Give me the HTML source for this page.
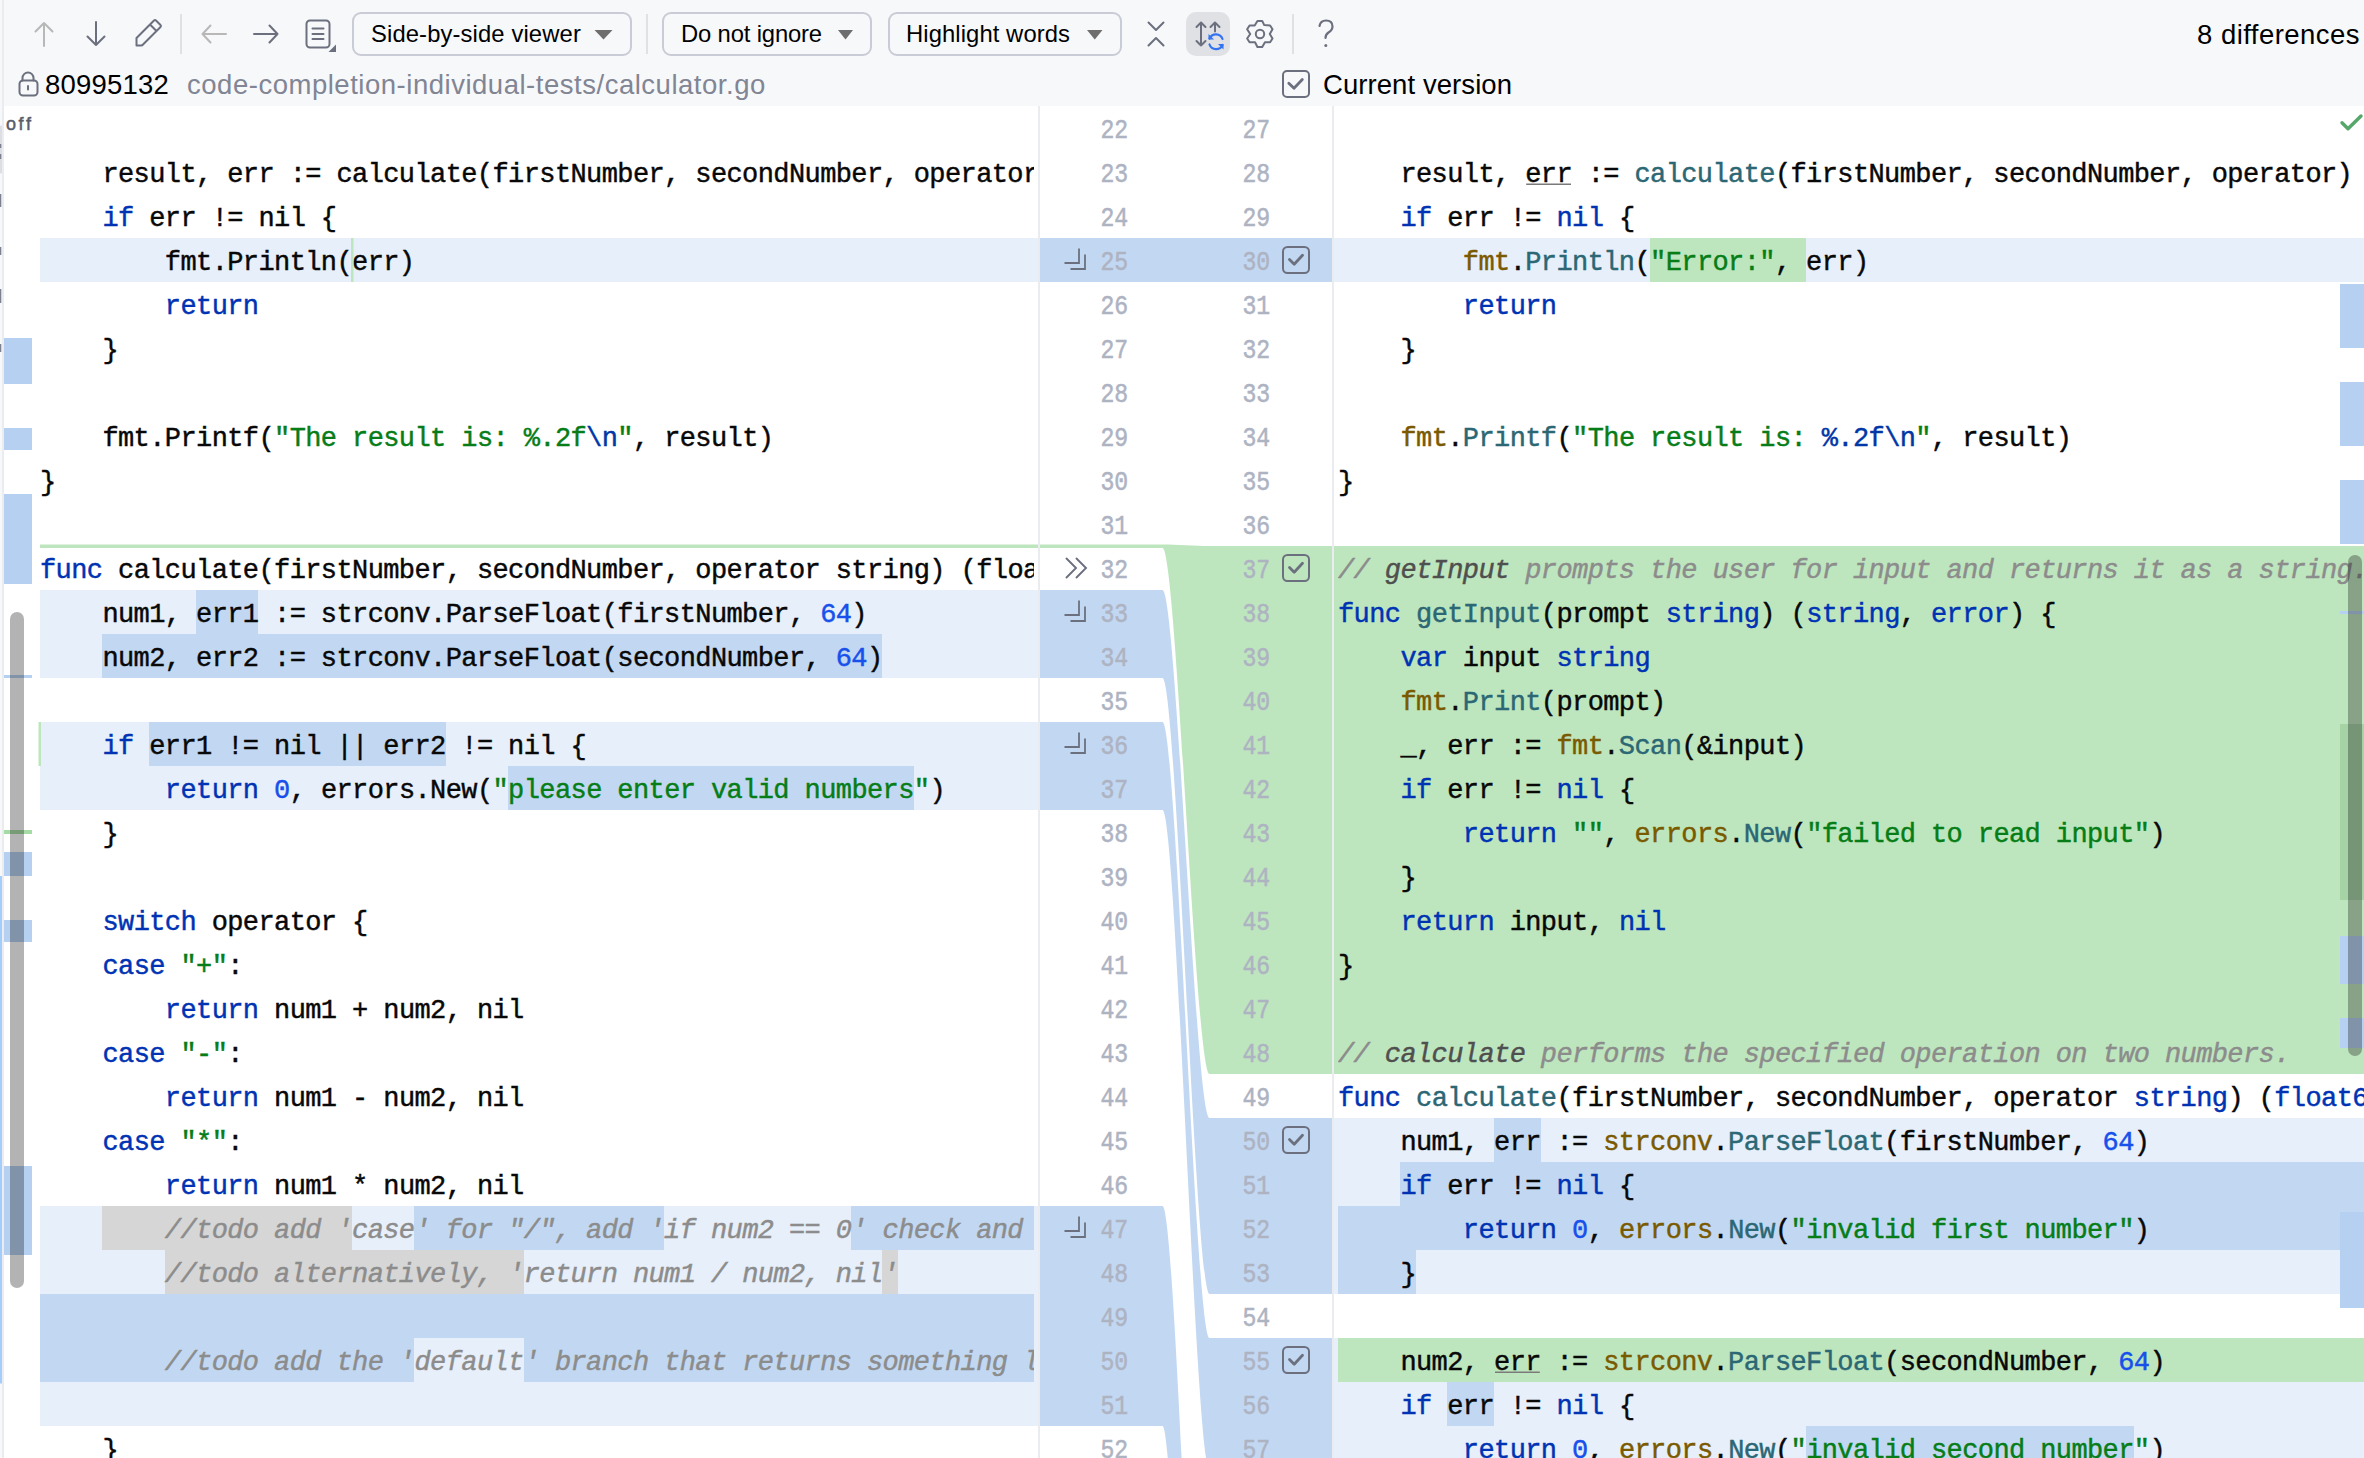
<!DOCTYPE html>
<html><head><meta charset="utf-8">
<style>
*{box-sizing:border-box}
html,body{margin:0;padding:0}
body{width:2364px;height:1458px;overflow:hidden;position:relative;background:#fff;font-family:"Liberation Sans",sans-serif}
.abs{position:absolute}
#hdr{position:absolute;left:0;top:0;width:2364px;height:106px;background:#F7F8FA}
.ui{position:absolute;font-family:"Liberation Sans",sans-serif;font-size:26px;color:#000;white-space:pre;line-height:30px}
.dt{font-size:23.8px;line-height:23.8px}
.lt{font-size:27.5px;line-height:27.5px}
.dd{position:absolute;top:12px;height:44px;border:2px solid #C9CCD6;border-radius:9px}
.sep{position:absolute;top:14px;width:2px;height:40px;background:#DFE1E5}
.ed{position:absolute;top:106px;height:1352px;overflow:hidden}
.lb{position:absolute;left:0;height:44px}
.tl{position:absolute;left:0;height:44px;line-height:44px;padding-top:3px;white-space:pre;font-family:"Liberation Mono",monospace;font-size:27px;letter-spacing:-0.6px;-webkit-text-stroke:0.45px currentColor;color:#080808}
.kw{color:#0033B3}.str{color:#067D17}.num{color:#1750EB}.cmt{color:#8C8C8C;font-style:italic}.cmtn{color:#4F4F4F;font-style:italic}
.pkg{color:#7A5A00}.fn{color:#2B6774}.esc{color:#0037A6}
.ln{position:absolute;width:34px;text-align:right;height:44px;line-height:44px;padding-top:3px;font-family:"Liberation Mono",monospace;font-size:26px;color:#AEB3C2;-webkit-text-stroke:0.5px currentColor;transform-origin:18.3px 32px;transform:scale(0.89,1.06)}
svg{position:absolute;overflow:visible}
</style></head><body>
<div id="hdr"></div>
<!-- left thin strip -->
<div class="abs" style="left:0;top:0;width:2px;height:1458px;background:#F7F8FA"></div>
<div class="abs" style="left:2px;top:0;width:2px;height:1458px;background:#EBECF0"></div>

<!-- toolbar icons -->
<svg style="left:0;top:0" width="1400" height="106" viewBox="0 0 1400 106" fill="none" stroke-linecap="round" stroke-linejoin="round">
  <!-- up arrow disabled -->
  <g stroke="#B8B8B8" stroke-width="2"><path d="M44 23 V46 M35.5 31.5 L44 23 L52.5 31.5"/></g>
  <!-- down arrow -->
  <g stroke="#6C707E" stroke-width="2"><path d="M96 22 V45 M87.5 36.5 L96 45 L104.5 36.5"/></g>
  <!-- pencil -->
  <g stroke="#6C707E" stroke-width="2"><path d="M136.5 38 L154 20.5 Q155 19.5 156 20.5 L160.5 25 Q161.5 26 160.5 27 L143 44.5 Q142.5 45.5 141 45.5 H136.5 Z M150 24.5 L156.5 31"/></g>
  <!-- left disabled -->
  <g stroke="#B8B8B8" stroke-width="2"><path d="M202.5 34 H226 M210.5 25.5 L202.5 34 L210.5 42.5"/></g>
  <!-- right -->
  <g stroke="#6C707E" stroke-width="2"><path d="M254 34 H277.5 M269.5 25.5 L277.5 34 L269.5 42.5"/></g>
  <!-- doc -->
  <g stroke="#6C707E" stroke-width="2"><rect x="306.5" y="20.5" width="23" height="27" rx="3.5"/><path d="M312.5 28.5 H323.5 M312.5 34 H323.5 M312.5 39 H323.5"/></g>
  <path d="M336 44.5 V52 H328.5 Z" fill="#6C707E"/>
  <!-- dropdown triangles -->
  <path d="M594.5 30 H612.5 L603.5 39.5 Z" fill="#6E6E6E"/>
  <path d="M838 30 H853 L845.5 39.5 Z" fill="#6E6E6E"/>
  <path d="M1087 30 H1102.5 L1094.75 39.5 Z" fill="#6E6E6E"/>
  <!-- collapse X -->
  <g stroke="#6C707E" stroke-width="2"><path d="M1148.5 22.5 L1156 30 L1163.5 22.5 M1148.5 45.5 L1156 38 L1163.5 45.5"/></g>
  <!-- sync toggle bg -->
  <rect x="1186" y="12" width="44" height="44" rx="10" fill="#DFE1E5" stroke="none"/>
  <g stroke="#6C707E" stroke-width="2"><path d="M1201 22.5 V45.5 M1196.5 27 L1201 22.5 L1205.5 27 M1196.5 41 L1201 45.5 L1205.5 41 M1215 22.5 V31.5 M1210.5 27 L1215 22.5 L1219.5 27"/></g>
  <g stroke="#3574F0" stroke-width="2.2"><path d="M1209.5 38.5 A7 7 0 0 1 1222.5 39 M1222.5 45 A7 7 0 0 1 1209.5 44.5"/></g>
  <path d="M1208.5 34 V39.5 H1214 Z" fill="#3574F0"/>
  <path d="M1223.5 49.5 V44 H1218 Z" fill="#3574F0"/>
  <!-- gear -->
  <g stroke="#6C707E" stroke-width="2"><circle cx="1260" cy="34" r="4.2"/>
  <path d="M1257.43 20.97 L1262.22 20.97 L1264.28 25.08 L1270.11 25.43 L1272.51 29.20 L1269.77 34.00 L1272.51 38.45 L1270.11 42.22 L1264.97 42.22 L1262.22 47.02 L1257.43 47.02 L1255.03 42.22 L1249.54 42.22 L1247.14 38.45 L1250.23 34.00 L1247.14 29.20 L1249.54 25.43 L1254.68 25.43 Z"/></g>
  <!-- help -->
  <g stroke="#6C707E" stroke-width="2.2"><path d="M1319.5 26 Q1320.5 20.5 1326 20.5 Q1332.5 20.5 1332.5 26.5 Q1332.5 30 1328.5 32.5 Q1325.5 34.5 1325.5 38"/></g>
  <circle cx="1325.8" cy="45.5" r="1.5" fill="#6C707E"/>
  <!-- lock -->
  <g stroke="#6C707E" stroke-width="2"><path d="M22.5 80.5 V78 A5.5 5.5 0 0 1 33.5 78 V80.5"/><rect x="19.5" y="80.5" width="18" height="15" rx="3.5"/><path d="M28 86 V89.5"/></g>
  <!-- current version checkbox -->
  <g stroke="#6C707E" stroke-width="2"><rect x="1283" y="71" width="26" height="26" rx="4"/><path d="M1288.8 83.2 L1294 88.2 L1302.3 79.5" stroke-width="2.8"/></g>
</svg>

<!-- toolbar texts -->
<div class="sep" style="left:180px"></div>
<div class="dd" style="left:352px;width:280px"></div>
<div class="ui dt" id="t_sbs" style="left:371px;top:21.9px;letter-spacing:0.12px">Side-by-side viewer</div>
<div class="sep" style="left:646px"></div>
<div class="dd" style="left:662px;width:210px"></div>
<div class="ui dt" id="t_dni" style="left:681px;top:21.9px;letter-spacing:-0.15px">Do not ignore</div>
<div class="dd" style="left:888px;width:234px"></div>
<div class="ui dt" id="t_hw" style="left:906px;top:21.9px;letter-spacing:0.09px">Highlight words</div>
<div class="sep" style="left:1292px"></div>
<div class="ui lt" id="t_diff" style="right:4px;top:20.6px;letter-spacing:0.46px">8 differences</div>
<div class="ui lt" id="t_rev" style="left:45px;top:70.8px;letter-spacing:0.2px">80995132</div>
<div class="ui lt" id="t_path" style="left:187px;top:70.8px;color:#818594;letter-spacing:0.52px">code-completion-individual-tests/calculator.go</div>
<div class="ui lt" id="t_cur" style="left:1323px;top:70.8px;letter-spacing:0.07px">Current version</div>

<!-- left error stripe -->
<div class="abs" style="left:4px;top:106px;width:34px;height:1352px;background:#fff"></div>
<div class="ui" style="left:6px;top:112px;font-size:18px;letter-spacing:2.6px;-webkit-text-stroke:0.5px currentColor;color:#585C6A;line-height:24px">off</div>

<!-- left editor -->
<div class="ed" style="left:40px;width:998px">
<div class="lb" style="top:132px;width:998px;background:#E7EFFA"></div>
<div class="lb" style="top:484px;width:998px;background:#E7EFFA"></div>
<div class="lb" style="top:528px;width:998px;background:#E7EFFA"></div>
<div class="lb" style="top:616px;width:998px;background:#E7EFFA"></div>
<div class="lb" style="top:660px;width:998px;background:#E7EFFA"></div>
<div class="lb" style="top:1100px;width:998px;background:#E7EFFA"></div>
<div class="lb" style="top:1144px;width:998px;background:#E7EFFA"></div>
<div class="lb" style="top:1188px;width:998px;background:#E7EFFA"></div>
<div class="lb" style="top:1232px;width:998px;background:#E7EFFA"></div>
<div class="lb" style="top:1276px;width:998px;background:#E7EFFA"></div>
<div style="position:absolute;left:0px;top:0;width:994px;height:1352px;overflow:hidden">
<div class="lb" style="top:484px;left:156.0px;width:62.4px;background:#C2D8F2"></div>
<div class="lb" style="top:528px;left:62.4px;width:780.0px;background:#C2D8F2"></div>
<div class="lb" style="top:616px;left:109.2px;width:296.4px;background:#C2D8F2"></div>
<div class="lb" style="top:660px;left:468.0px;width:405.6px;background:#C2D8F2"></div>
<div class="lb" style="top:1100px;left:62.4px;width:249.6px;background:#D6D6D6"></div>
<div class="lb" style="top:1100px;left:374.4px;width:249.6px;background:#C2D8F2"></div>
<div class="lb" style="top:1100px;left:811.2px;width:182.8px;background:#C2D8F2"></div>
<div class="lb" style="top:1144px;left:124.8px;width:358.8px;background:#D6D6D6"></div>
<div class="lb" style="top:1144px;left:842.4px;width:15.6px;background:#D6D6D6"></div>
<div class="lb" style="top:1188px;left:0.0px;width:994.0px;background:#C2D8F2"></div>
<div class="lb" style="top:1232px;left:0.0px;width:374.4px;background:#C2D8F2"></div>
<div class="lb" style="top:1232px;left:483.6px;width:510.4px;background:#C2D8F2"></div>
<div class="tl" style="top:0px"></div>
<div class="tl" style="top:44px">    result, err := calculate(firstNumber, secondNumber, operator)</div>
<div class="tl" style="top:88px">    <span class="kw">if</span> err != nil {</div>
<div class="tl" style="top:132px">        fmt.Println(err)</div>
<div class="tl" style="top:176px">        <span class="kw">return</span></div>
<div class="tl" style="top:220px">    }</div>
<div class="tl" style="top:264px"></div>
<div class="tl" style="top:308px">    fmt.Printf(<span class="str">&quot;The result is: %.2f</span><span class="esc">\n</span><span class="str">&quot;</span>, result)</div>
<div class="tl" style="top:352px">}</div>
<div class="tl" style="top:396px"></div>
<div class="tl" style="top:440px"><span class="kw">func</span> calculate(firstNumber, secondNumber, operator string) (float64, error) {</div>
<div class="tl" style="top:484px">    num1, err1 := strconv.ParseFloat(firstNumber, <span class="num">64</span>)</div>
<div class="tl" style="top:528px">    num2, err2 := strconv.ParseFloat(secondNumber, <span class="num">64</span>)</div>
<div class="tl" style="top:572px"></div>
<div class="tl" style="top:616px">    <span class="kw">if</span> err1 != nil || err2 != nil {</div>
<div class="tl" style="top:660px">        <span class="kw">return</span> <span class="num">0</span>, errors.New(<span class="str">&quot;please enter valid numbers&quot;</span>)</div>
<div class="tl" style="top:704px">    }</div>
<div class="tl" style="top:748px"></div>
<div class="tl" style="top:792px">    <span class="kw">switch</span> operator {</div>
<div class="tl" style="top:836px">    <span class="kw">case</span> <span class="str">&quot;+&quot;</span>:</div>
<div class="tl" style="top:880px">        <span class="kw">return</span> num1 + num2, nil</div>
<div class="tl" style="top:924px">    <span class="kw">case</span> <span class="str">&quot;-&quot;</span>:</div>
<div class="tl" style="top:968px">        <span class="kw">return</span> num1 - num2, nil</div>
<div class="tl" style="top:1012px">    <span class="kw">case</span> <span class="str">&quot;*&quot;</span>:</div>
<div class="tl" style="top:1056px">        <span class="kw">return</span> num1 * num2, nil</div>
<div class="tl" style="top:1100px">        <span class="cmt">//todo add &#x27;case&#x27; for &quot;/&quot;, add &#x27;if num2 == 0&#x27; check and return error</span></div>
<div class="tl" style="top:1144px">        <span class="cmt">//todo alternatively, &#x27;return num1 / num2, nil&#x27;</span></div>
<div class="tl" style="top:1188px"></div>
<div class="tl" style="top:1232px">        <span class="cmt">//todo add the &#x27;default&#x27; branch that returns something like errors.New</span></div>
<div class="tl" style="top:1276px"></div>
<div class="tl" style="top:1320px">    }</div>
</div>
</div>
<!-- separators -->
<div class="abs" style="left:1038px;top:106px;width:2px;height:1352px;background:#EBECF0"></div>
<div class="abs" style="left:1332px;top:106px;width:2px;height:1352px;background:#EBECF0"></div>

<!-- divider -->
<svg style="left:0;top:0" width="2364" height="1458" viewBox="0 0 2364 1458">
<path d="M 1040 238 L 1162.5 238 C 1176.60 238.00 1195.40 238.00 1209.50 238.00 L 1332 238 L 1332 282 L 1209.5 282 C 1195.40 282.00 1176.60 282.00 1162.50 282.00 L 1040 282 Z" fill="#C2D8F2"/>
<path d="M 1040 544.5 L 1162.5 544.5 C 1176.60 544.50 1195.40 546.00 1209.50 546.00 L 1332 546 L 1332 1074 L 1209.5 1074 C 1195.40 1074.00 1176.60 548.00 1162.50 548.00 L 1040 548 Z" fill="#BEE6BE"/>
<path d="M 1040 590 L 1162.5 590 C 1176.60 590.00 1195.40 1118.00 1209.50 1118.00 L 1332 1118 L 1332 1294 L 1209.5 1294 C 1195.40 1294.00 1176.60 678.00 1162.50 678.00 L 1040 678 Z" fill="#C2D8F2"/>
<path d="M 1040 722 L 1162.5 722 C 1176.60 722.00 1195.40 1338.00 1209.50 1338.00 L 1332 1338 L 1332 1470 L 1209.5 1470 C 1195.40 1470.00 1176.60 810.00 1162.50 810.00 L 1040 810 Z" fill="#C2D8F2"/>
<path d="M 1040 1206 L 1162.5 1206 C 1176.60 1206.00 1195.40 1890.00 1209.50 1890.00 L 1332 1890 L 1332 2232 L 1209.5 2232 C 1195.40 2232.00 1176.60 1426.00 1162.50 1426.00 L 1040 1426 Z" fill="#C2D8F2"/>
<rect x="40" y="544.5" width="998" height="3.5" fill="#BEE6BE"/>
</svg>
<div class="abs" style="left:1332px;top:546px;width:2px;height:528px;background:#EBECF0;opacity:0.9"></div>

<!-- line numbers -->
<div class="ln" style="top:106px;left:1096px">22</div>
<div class="ln" style="top:106px;left:1238px">27</div>
<div class="ln" style="top:150px;left:1096px">23</div>
<div class="ln" style="top:150px;left:1238px">28</div>
<div class="ln" style="top:194px;left:1096px">24</div>
<div class="ln" style="top:194px;left:1238px">29</div>
<div class="ln" style="top:238px;left:1096px">25</div>
<div class="ln" style="top:238px;left:1238px">30</div>
<div class="ln" style="top:282px;left:1096px">26</div>
<div class="ln" style="top:282px;left:1238px">31</div>
<div class="ln" style="top:326px;left:1096px">27</div>
<div class="ln" style="top:326px;left:1238px">32</div>
<div class="ln" style="top:370px;left:1096px">28</div>
<div class="ln" style="top:370px;left:1238px">33</div>
<div class="ln" style="top:414px;left:1096px">29</div>
<div class="ln" style="top:414px;left:1238px">34</div>
<div class="ln" style="top:458px;left:1096px">30</div>
<div class="ln" style="top:458px;left:1238px">35</div>
<div class="ln" style="top:502px;left:1096px">31</div>
<div class="ln" style="top:502px;left:1238px">36</div>
<div class="ln" style="top:546px;left:1096px">32</div>
<div class="ln" style="top:546px;left:1238px">37</div>
<div class="ln" style="top:590px;left:1096px">33</div>
<div class="ln" style="top:590px;left:1238px">38</div>
<div class="ln" style="top:634px;left:1096px">34</div>
<div class="ln" style="top:634px;left:1238px">39</div>
<div class="ln" style="top:678px;left:1096px">35</div>
<div class="ln" style="top:678px;left:1238px">40</div>
<div class="ln" style="top:722px;left:1096px">36</div>
<div class="ln" style="top:722px;left:1238px">41</div>
<div class="ln" style="top:766px;left:1096px">37</div>
<div class="ln" style="top:766px;left:1238px">42</div>
<div class="ln" style="top:810px;left:1096px">38</div>
<div class="ln" style="top:810px;left:1238px">43</div>
<div class="ln" style="top:854px;left:1096px">39</div>
<div class="ln" style="top:854px;left:1238px">44</div>
<div class="ln" style="top:898px;left:1096px">40</div>
<div class="ln" style="top:898px;left:1238px">45</div>
<div class="ln" style="top:942px;left:1096px">41</div>
<div class="ln" style="top:942px;left:1238px">46</div>
<div class="ln" style="top:986px;left:1096px">42</div>
<div class="ln" style="top:986px;left:1238px">47</div>
<div class="ln" style="top:1030px;left:1096px">43</div>
<div class="ln" style="top:1030px;left:1238px">48</div>
<div class="ln" style="top:1074px;left:1096px">44</div>
<div class="ln" style="top:1074px;left:1238px">49</div>
<div class="ln" style="top:1118px;left:1096px">45</div>
<div class="ln" style="top:1118px;left:1238px">50</div>
<div class="ln" style="top:1162px;left:1096px">46</div>
<div class="ln" style="top:1162px;left:1238px">51</div>
<div class="ln" style="top:1206px;left:1096px">47</div>
<div class="ln" style="top:1206px;left:1238px">52</div>
<div class="ln" style="top:1250px;left:1096px">48</div>
<div class="ln" style="top:1250px;left:1238px">53</div>
<div class="ln" style="top:1294px;left:1096px">49</div>
<div class="ln" style="top:1294px;left:1238px">54</div>
<div class="ln" style="top:1338px;left:1096px">50</div>
<div class="ln" style="top:1338px;left:1238px">55</div>
<div class="ln" style="top:1382px;left:1096px">51</div>
<div class="ln" style="top:1382px;left:1238px">56</div>
<div class="ln" style="top:1426px;left:1096px">52</div>
<div class="ln" style="top:1426px;left:1238px">57</div>

<!-- right editor -->
<div class="ed" style="left:1334px;width:1030px">
<div class="lb" style="top:132px;width:1030px;background:#E7EFFA"></div>
<div class="lb" style="top:440px;width:1030px;background:#BEE6BE"></div>
<div class="lb" style="top:484px;width:1030px;background:#BEE6BE"></div>
<div class="lb" style="top:528px;width:1030px;background:#BEE6BE"></div>
<div class="lb" style="top:572px;width:1030px;background:#BEE6BE"></div>
<div class="lb" style="top:616px;width:1030px;background:#BEE6BE"></div>
<div class="lb" style="top:660px;width:1030px;background:#BEE6BE"></div>
<div class="lb" style="top:704px;width:1030px;background:#BEE6BE"></div>
<div class="lb" style="top:748px;width:1030px;background:#BEE6BE"></div>
<div class="lb" style="top:792px;width:1030px;background:#BEE6BE"></div>
<div class="lb" style="top:836px;width:1030px;background:#BEE6BE"></div>
<div class="lb" style="top:880px;width:1030px;background:#BEE6BE"></div>
<div class="lb" style="top:924px;width:1030px;background:#BEE6BE"></div>
<div class="lb" style="top:1012px;width:1030px;background:#E7EFFA"></div>
<div class="lb" style="top:1056px;width:1030px;background:#E7EFFA"></div>
<div class="lb" style="top:1100px;width:1030px;background:#E7EFFA"></div>
<div class="lb" style="top:1144px;width:1030px;background:#E7EFFA"></div>
<div class="lb" style="top:1232px;width:1030px;background:#E7EFFA"></div>
<div class="lb" style="top:1276px;width:1030px;background:#E7EFFA"></div>
<div class="lb" style="top:1320px;width:1030px;background:#E7EFFA"></div>
<div style="position:absolute;left:4px;top:0;width:1026px;height:1352px;overflow:hidden">
<div class="lb" style="top:132px;left:312.0px;width:156.0px;background:#BEE6BE"></div>
<div class="lb" style="top:1012px;left:156.0px;width:46.8px;background:#C2D8F2"></div>
<div class="lb" style="top:1056px;left:62.4px;width:963.6px;background:#C2D8F2"></div>
<div class="lb" style="top:1100px;left:0.0px;width:1026.0px;background:#C2D8F2"></div>
<div class="lb" style="top:1144px;left:0.0px;width:78.0px;background:#C2D8F2"></div>
<div class="lb" style="top:1232px;left:0.0px;width:1026.0px;background:#BEE6BE"></div>
<div class="lb" style="top:1276px;left:109.2px;width:46.8px;background:#C2D8F2"></div>
<div class="lb" style="top:1320px;left:468.0px;width:327.6px;background:#C2D8F2"></div>
<div class="tl" style="top:0px"></div>
<div class="tl" style="top:44px">    result, err := <span class="fn">calculate</span>(firstNumber, secondNumber, operator)</div>
<div class="tl" style="top:88px">    <span class="kw">if</span> err != <span class="kw">nil</span> {</div>
<div class="tl" style="top:132px">        <span class="pkg">fmt</span>.<span class="fn">Println</span>(<span class="str">&quot;Error:&quot;</span>, err)</div>
<div class="tl" style="top:176px">        <span class="kw">return</span></div>
<div class="tl" style="top:220px">    }</div>
<div class="tl" style="top:264px"></div>
<div class="tl" style="top:308px">    <span class="pkg">fmt</span>.<span class="fn">Printf</span>(<span class="str">&quot;The result is: </span><span class="esc">%.2f\n</span><span class="str">&quot;</span>, result)</div>
<div class="tl" style="top:352px">}</div>
<div class="tl" style="top:396px"></div>
<div class="tl" style="top:440px"><span class="cmt">// </span><span class="cmtn">getInput</span><span class="cmt"> prompts the user for input and returns it as a string.</span></div>
<div class="tl" style="top:484px"><span class="kw">func</span> <span class="fn">getInput</span>(prompt <span class="kw">string</span>) (<span class="kw">string</span>, <span class="kw">error</span>) {</div>
<div class="tl" style="top:528px">    <span class="kw">var</span> input <span class="kw">string</span></div>
<div class="tl" style="top:572px">    <span class="pkg">fmt</span>.<span class="fn">Print</span>(prompt)</div>
<div class="tl" style="top:616px">    _, err := <span class="pkg">fmt</span>.<span class="fn">Scan</span>(&amp;input)</div>
<div class="tl" style="top:660px">    <span class="kw">if</span> err != <span class="kw">nil</span> {</div>
<div class="tl" style="top:704px">        <span class="kw">return</span> <span class="str">&quot;&quot;</span>, <span class="pkg">errors</span>.<span class="fn">New</span>(<span class="str">&quot;failed to read input&quot;</span>)</div>
<div class="tl" style="top:748px">    }</div>
<div class="tl" style="top:792px">    <span class="kw">return</span> input, <span class="kw">nil</span></div>
<div class="tl" style="top:836px">}</div>
<div class="tl" style="top:880px"></div>
<div class="tl" style="top:924px"><span class="cmt">// </span><span class="cmtn">calculate</span><span class="cmt"> performs the specified operation on two numbers.</span></div>
<div class="tl" style="top:968px"><span class="kw">func</span> <span class="fn">calculate</span>(firstNumber, secondNumber, operator <span class="kw">string</span>) (<span class="kw">float64</span>, <span class="kw">error</span>) {</div>
<div class="tl" style="top:1012px">    num1, err := <span class="pkg">strconv</span>.<span class="fn">ParseFloat</span>(firstNumber, <span class="num">64</span>)</div>
<div class="tl" style="top:1056px">    <span class="kw">if</span> err != <span class="kw">nil</span> {</div>
<div class="tl" style="top:1100px">        <span class="kw">return</span> <span class="num">0</span>, <span class="pkg">errors</span>.<span class="fn">New</span>(<span class="str">&quot;invalid first number&quot;</span>)</div>
<div class="tl" style="top:1144px">    }</div>
<div class="tl" style="top:1188px"></div>
<div class="tl" style="top:1232px">    num2, err := <span class="pkg">strconv</span>.<span class="fn">ParseFloat</span>(secondNumber, <span class="num">64</span>)</div>
<div class="tl" style="top:1276px">    <span class="kw">if</span> err != <span class="kw">nil</span> {</div>
<div class="tl" style="top:1320px">        <span class="kw">return</span> <span class="num">0</span>, <span class="pkg">errors</span>.<span class="fn">New</span>(<span class="str">&quot;invalid second number&quot;</span>)</div>
</div>
</div>

<svg style="left:0;top:0" width="2364" height="1458" viewBox="0 0 2364 1458">
<path d="M1079 248.5 V263 H1064.5 M1085 254.5 V269 H1070.5" stroke="#6C707E" stroke-width="1.8" fill="none"/>
<path d="M1079 600.5 V615 H1064.5 M1085 606.5 V621 H1070.5" stroke="#6C707E" stroke-width="1.8" fill="none"/>
<path d="M1079 732.5 V747 H1064.5 M1085 738.5 V753 H1070.5" stroke="#6C707E" stroke-width="1.8" fill="none"/>
<path d="M1079 1216.5 V1231 H1064.5 M1085 1222.5 V1237 H1070.5" stroke="#6C707E" stroke-width="1.8" fill="none"/>
<path d="M1066.5 558.5 L1076 568 L1066.5 577.5 M1076.5 558.5 L1086 568 L1076.5 577.5" stroke="#6C707E" stroke-width="1.9" fill="none" stroke-linecap="round" stroke-linejoin="miter"/>
<rect x="1283" y="247" width="26" height="26" rx="4.5" stroke="#6C707E" stroke-width="2" fill="none"/>
<path d="M1289.5 259.5 L1294.2 264.2 L1302.5 255.2" stroke="#6C707E" stroke-width="2.8" fill="none" stroke-linecap="round" stroke-linejoin="round"/>
<rect x="1283" y="555" width="26" height="26" rx="4.5" stroke="#6C707E" stroke-width="2" fill="none"/>
<path d="M1289.5 567.5 L1294.2 572.2 L1302.5 563.2" stroke="#6C707E" stroke-width="2.8" fill="none" stroke-linecap="round" stroke-linejoin="round"/>
<rect x="1283" y="1127" width="26" height="26" rx="4.5" stroke="#6C707E" stroke-width="2" fill="none"/>
<path d="M1289.5 1139.5 L1294.2 1144.2 L1302.5 1135.2" stroke="#6C707E" stroke-width="2.8" fill="none" stroke-linecap="round" stroke-linejoin="round"/>
<rect x="1283" y="1347" width="26" height="26" rx="4.5" stroke="#6C707E" stroke-width="2" fill="none"/>
<path d="M1289.5 1359.5 L1294.2 1364.2 L1302.5 1355.2" stroke="#6C707E" stroke-width="2.8" fill="none" stroke-linecap="round" stroke-linejoin="round"/>
<path d="M2342 122.8 L2348 128.8 L2361 116" stroke="#55A86A" stroke-width="3.4" fill="none" stroke-linecap="round" stroke-linejoin="round"/>
<rect x="351" y="238" width="2.5" height="44" fill="#BEE6BE"/>
<rect x="38.5" y="722" width="2.5" height="44" fill="#BEE6BE"/>
<rect x="1526.2" y="183.5" width="44.8" height="1.5" fill="#7A7A7A"/>
<rect x="1495.0" y="1371.5" width="44.8" height="1.5" fill="#7A7A7A"/>
<rect x="4" y="338" width="28" height="46" fill="#B5D0F0"/>
<rect x="4" y="428" width="28" height="22" fill="#B5D0F0"/>
<rect x="4" y="494" width="28" height="90" fill="#B5D0F0"/>
<rect x="4" y="675" width="28" height="3" fill="#B5D0F0"/>
<rect x="4" y="852" width="28" height="24" fill="#B5D0F0"/>
<rect x="4" y="920" width="28" height="22" fill="#B5D0F0"/>
<rect x="4" y="1166" width="28" height="89" fill="#B5D0F0"/>
<rect x="4" y="830" width="28" height="4" fill="#A5DCA5"/>
<rect x="0" y="876" width="2" height="507.5" fill="#A3CEFC"/>
<rect x="10" y="612" width="14" height="676" rx="7" fill="rgba(18,18,18,0.32)"/>
<rect x="2340" y="284" width="24" height="64" fill="#B5D0F0"/>
<rect x="2340" y="382" width="24" height="64" fill="#B5D0F0"/>
<rect x="2340" y="480" width="24" height="64" fill="#B5D0F0"/>
<rect x="2340" y="611" width="24" height="3" fill="#B5D0F0"/>
<rect x="2340" y="936" width="24" height="48" fill="#B5D0F0"/>
<rect x="2340" y="1018" width="24" height="30" fill="#B5D0F0"/>
<rect x="2340" y="1212" width="24" height="96" fill="#B5D0F0"/>
<rect x="2340" y="724" width="24" height="176" fill="#A6D3A6"/>
<rect x="2348" y="555" width="14" height="501" rx="7" fill="rgba(18,18,18,0.32)"/>
<rect x="0" y="125.6" width="2" height="47.8" fill="#DCDEE3"/>
<rect x="0" y="144" width="1.3" height="4" fill="#7D8090"/>
<rect x="0" y="154" width="1.3" height="5" fill="#7D8090"/>
<rect x="0" y="194" width="1.3" height="13" fill="#7D8090"/>
<rect x="0" y="247" width="1.3" height="8" fill="#7D8090"/>
<rect x="0" y="289" width="1.3" height="14" fill="#7D8090"/>
<rect x="0" y="344" width="1.3" height="8" fill="#7D8090"/>
</svg>

</body></html>
